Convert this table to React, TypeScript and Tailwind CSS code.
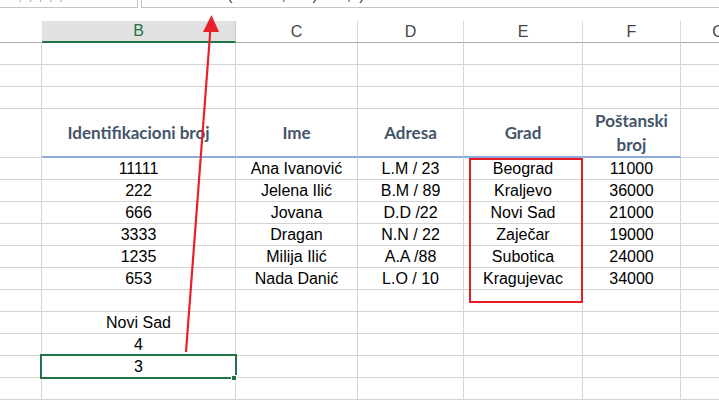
import React from "react";

const WIDTHS = ["w-[42px]", "w-[194px]", "w-[122px]", "w-[106px]", "w-[119px]", "w-[98px]", "w-[76px]"];

const LETTERS = ["", "B", "C", "D", "E", "F", "G"];

const EMPTY: string[][] = [
  ["", "", "", "", "", "", ""],
  ["", "", "", "", "", "", ""],
  ["", "", "", "", "", "", ""],
];

const PEOPLE: string[][] = [
  ["11111", "Ana Ivanović", "L.M / 23", "Beograd", "11000"],
  ["222", "Jelena Ilić", "B.M / 89", "Kraljevo", "36000"],
  ["666", "Jovana", "D.D /22", "Novi Sad", "21000"],
  ["3333", "Dragan", "N.N / 22", "Zaječar", "19000"],
  ["1235", "Milija Ilić", "A.A /88", "Subotica", "24000"],
  ["653", "Nada Danić", "L.O / 10", "Kragujevac", "34000"],
];

const BOTTOM = ["", "Novi Sad", "4", "3", "", ""];

function Row({ cells }: { cells: string[] }) {
  return (
    <div className="flex h-[22px] shrink-0">
      {WIDTHS.map((w, i) => (
        <div
          key={i}
          className={`${w} shrink-0 flex items-center justify-center border-r border-b border-[#d4d4d4] leading-[22px] text-black`}
        >
          {cells[i] ?? ""}
        </div>
      ))}
    </div>
  );
}

export default function App() {
  return (
    <div className="relative h-[400px] w-[719px] overflow-hidden bg-white font-['Liberation_Sans',Arial,sans-serif] text-[16px]">
      {/* formula bar, cut off at the top */}
      <div className="flex h-[21px]">
        <div className="h-[8px] w-[138px] shrink-0 overflow-hidden border-r border-b border-[#c6c6c6] bg-white">
          <div className="-mt-[15px] pl-[18px] text-[15px] leading-[20px] text-[#9a9a9a] tracking-[6px]">,;,;;</div>
        </div>
        <div className="ml-[3px] h-[8px] flex-1 overflow-hidden border-l border-b border-[#c6c6c6] bg-white">
          <div className="-mt-[15px] pl-[10px] text-[15px] leading-[20px] text-[#333] whitespace-pre">
            {"=COUNTIF(E7:E12;B14)       ,  )"}
          </div>
        </div>
      </div>

      {/* column headers */}
      <div className="flex h-[22px]">
        {WIDTHS.map((w, i) =>
          i === 1 ? (
            <div
              key={i}
              className={`${w} shrink-0 flex items-center justify-center border-r border-[#c6c6c6] border-b-2 border-b-[#217346] bg-[#e1e1e1] text-[#217346]`}
            >
              {LETTERS[i]}
            </div>
          ) : (
            <div
              key={i}
              className={`${w} shrink-0 flex items-center justify-center border-b border-b-[#ababab] border-r ${i === 0 ? "border-r-transparent" : "border-r-[#dadada]"} text-[#444]`}
            >
              {LETTERS[i]}
            </div>
          )
        )}
      </div>

      {EMPTY.map((r, i) => (
        <Row key={i} cells={r} />
      ))}

      {/* table header row */}
      <div className="flex h-[49px] font-['Lato',sans-serif] text-[17px] font-bold text-[#44546a]">
        <div className="w-[42px] shrink-0 border-r border-b border-[#d4d4d4]" />
        <div className="w-[194px] shrink-0 flex items-center justify-center border-r border-r-[#d4d4d4] border-b-2 border-b-[#8eaadb]">
          Identifikacioni broj
        </div>
        <div className="w-[122px] shrink-0 flex items-center justify-center border-r border-r-[#d4d4d4] border-b-2 border-b-[#8eaadb]">
          Ime
        </div>
        <div className="w-[106px] shrink-0 flex items-center justify-center border-r border-r-[#d4d4d4] border-b-2 border-b-[#8eaadb]">
          Adresa
        </div>
        <div className="w-[119px] shrink-0 flex items-center justify-center border-r border-r-[#d4d4d4] border-b-2 border-b-[#8eaadb]">
          Grad
        </div>
        <div className="w-[98px] shrink-0 flex items-center justify-center text-center leading-[24px] border-r border-r-[#d4d4d4] border-b-2 border-b-[#8eaadb]">
          Poštanski
          <br />
          broj
        </div>
        <div className="w-[76px] shrink-0 border-r border-b border-[#d4d4d4]" />
      </div>

      {PEOPLE.map((p) => (
        <Row key={p[0]} cells={["", ...p, ""]} />
      ))}

      {BOTTOM.map((v, i) => (
        <Row key={`b${i}`} cells={["", v, "", "", "", "", ""]} />
      ))}

      {/* red box around Grad */}
      <div className="absolute left-[469px] top-[158px] h-[145px] w-[114px] border-2 border-[#e81c24]" />

      {/* selected cell */}
      <div className="absolute left-[40px] top-[354px] h-[25px] w-[197px] border-2 border-[#217346]" />
      <div className="absolute left-[231px] top-[375px] h-[6px] w-[6px] border border-white bg-[#217346]" />

      {/* arrow annotation */}
      <svg className="absolute left-0 top-0" width="719" height="400" viewBox="0 0 719 400">
        <line x1="186" y1="352" x2="210.5" y2="28" stroke="#e8202a" strokeWidth="2.2" />
        <polygon points="211.5,15 203,32 219,32" fill="#e8202a" />
      </svg>
    </div>
  );
}
